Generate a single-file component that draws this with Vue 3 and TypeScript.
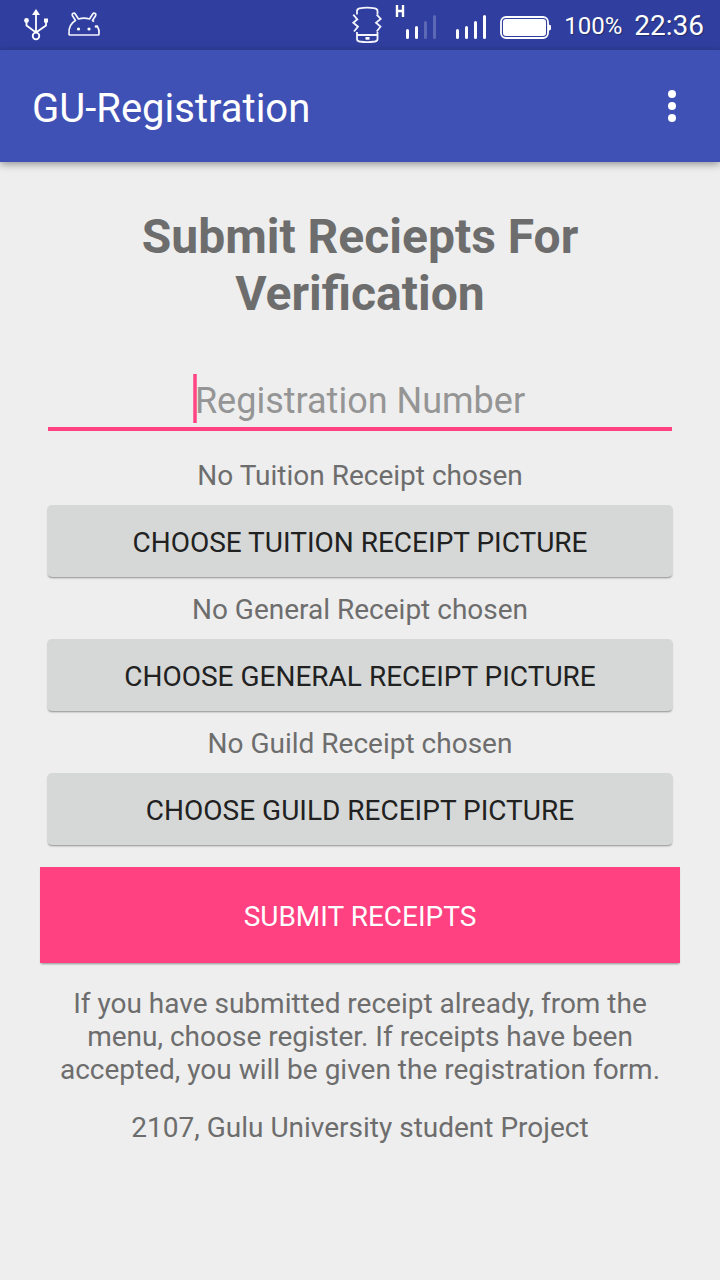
<script setup lang="ts">
import { ref } from 'vue'

interface Receipt {
  id: string
  name: string
}

const receipts: Receipt[] = [
  { id: 'tuition', name: 'Tuition' },
  { id: 'general', name: 'General' },
  { id: 'guild', name: 'Guild' },
]

const registrationNumber = ref('')
</script>

<template>
  <div class="screen">
    <div class="status">
      <svg class="usb" width="28" height="34" viewBox="0 0 28 34" fill="none" stroke="#fff" stroke-width="1.8">
        <path d="M14 5V25M4.500 13V17.500L14 24.500M24 13V17.500L14 24.500" />
        <path d="M14 1L18 7H10Z" fill="#fff" stroke="none" />
        <circle cx="4.500" cy="12.500" r="2.400" fill="#fff" stroke="none" />
        <path d="M22 10.500H26V14.500H22Z" fill="#fff" stroke="none" />
        <circle cx="14" cy="28" r="3.300" />
      </svg>
      <svg class="droid" width="34" height="26" viewBox="0 0 34 26" fill="none" stroke="#f3f4fc" stroke-width="1.700" stroke-linejoin="round">
        <path d="M2 22C1.500 16 4 11 8.500 8.500L5.300 3.500C4.500 1.300 7.300 .3 8.300 2L11.500 7C15 5.800 19 5.800 22.500 7L25.700 2C26.700 .3 29.500 1.300 28.700 3.500L25.500 8.500L27 9.700M30 13.500C31.500 16 32.500 19 32 22Q32 23 31 23H3Q2 23 2 22" />
        <circle cx="11.500" cy="17" r="1.600" fill="#fff" stroke="none" />
        <circle cx="22" cy="17" r="1.600" fill="#fff" stroke="none" />
        <circle cx="29" cy="14.500" r="1.300" fill="#fff" stroke="none" />
      </svg>
      <span class="spacer"></span>
      <svg class="vibrate" width="30" height="38" viewBox="0 0 30 38" fill="none" stroke="#f3f4fc" stroke-width="1.800">
        <path d="M5 8.500V5Q5 2.800 7.500 2.300Q15 1 23 2.300Q25.500 2.800 25.500 5V8.500M5 26V33Q5 35 7.500 35.500Q15 36.800 23 35.500Q25.500 35 25.500 33V26M5 29H25.500" />
        <path d="M1.300 8.700L5.300 13.300L1.300 16.700L6 20.700L2 25.500M24.700 8.700L28.700 13L24 16.700L28.500 20.700L24.700 25.500" />
        <path d="M13.500 31H17.500V33.700H13.500Z" fill="#fff" stroke="none" />
      </svg>
      <svg class="signals" width="92" height="38" viewBox="0 0 92 38" fill="none" stroke="#fff" stroke-width="3" stroke-linecap="round">
        <path d="M2 -1V11M8 -1V11M2 5H8" stroke-width="2.400" stroke-linecap="butt" />
        <path d="M12.500 24.500V31.500M21.500 21.500V31.500M62.500 24.500V31.500M71.500 21.500V31.500M80.500 16.500V31.500M89.500 10.500V31.500" />
        <path d="M30.500 16.500V31.500M39.500 10.500V31.500" stroke-opacity=".22" />
      </svg>
      <svg class="battery" width="52" height="24" viewBox="0 0 52 24">
        <rect x="1" y="1" width="47" height="21" rx="5" fill="none" stroke="#fff" stroke-width="1.800" />
        <rect x="3" y="3" width="43" height="17" rx="3" fill="#fff" />
        <path d="M48 7Q49 9 51 9.500V13.500Q49 14 48 16Z" fill="#fff" />
      </svg>
      <span class="percent">100%</span>
      <span class="clock">22:36</span>
    </div>

    <header class="bar">
      <h1>GU-Registration</h1>
      <button class="more" type="button" aria-label="More options">
        <svg width="8" height="32" viewBox="0 0 8 32" fill="#fff">
          <circle cx="4" cy="4" r="4" /><circle cx="4" cy="16" r="4" /><circle cx="4" cy="28" r="4" />
        </svg>
      </button>
    </header>

    <main>
      <h2>Submit Reciepts For Verification</h2>
      <form @submit.prevent>
        <div class="field">
          <input v-model="registrationNumber" type="text" placeholder="Registration Number" aria-label="Registration Number" />
          <span v-if="!registrationNumber" class="caret"></span>
        </div>
        <div v-for="receipt in receipts" :key="receipt.id" class="receipt">
          <p :id="receipt.id">No {{ receipt.name }} Receipt chosen</p>
          <button class="choose" type="button" :aria-describedby="receipt.id">CHOOSE {{ receipt.name.toUpperCase() }} RECEIPT PICTURE</button>
        </div>
        <button class="submit" type="submit">SUBMIT RECEIPTS</button>
      </form>
      <p class="info">If you have submitted receipt already, from the menu, choose register. If receipts have been accepted, you will be given the registration form.</p>
      <p class="credit">2107, Gulu University student Project</p>
    </main>
  </div>
</template>

<style>
body {
  margin: 0;
  background: #eeeeee;
}
</style>

<style scoped>
.screen {
  min-height: 100vh;
  background: #eeeeee;
  color: #6d6d6d;
  font-family: Roboto, "Liberation Sans", sans-serif;
}

h1, h2, p {
  margin: 0;
}

button, input {
  box-sizing: border-box;
  border: 0;
  padding: 0;
  font-family: inherit;
}

svg {
  display: block;
  flex: none;
  overflow: visible;
}

.status {
  display: flex;
  align-items: center;
  height: 50px;
  padding: 0 16px 0 22px;
  background: #303f9f;
  color: #fff;
}

.droid {
  margin-left: 17px;
}

.spacer {
  flex: 1;
}

.signals {
  margin: 0 13px;
}

.battery {
  margin-top: 6px;
}

.percent,
.clock {
  margin-left: 12px;
  padding-top: 2px;
  line-height: 32px;
  text-shadow: 1px 1px 1px rgba(0, 0, 0, 0.3);
}

.percent {
  font-size: 24px;
}

.clock {
  font-size: 28px;
}

.bar {
  display: flex;
  align-items: center;
  justify-content: space-between;
  height: 112px;
  padding: 0 24px 0 32px;
  background: #3f51b5;
  color: #fff;
  box-shadow: 0 2px 8px rgba(0, 0, 0, 0.4);
}

h1 {
  padding-top: 6px;
  font-size: 40px;
  font-weight: 400;
  line-height: 48px;
}

.more {
  display: flex;
  align-items: center;
  justify-content: center;
  width: 48px;
  height: 64px;
  background: transparent;
}

main {
  padding: 46px 40px;
  text-align: center;
  font-size: 28px;
  line-height: 33px;
}

h2 {
  font-size: 48px;
  font-weight: 700;
  line-height: 57px;
}

.field {
  position: relative;
  margin: 46px 8px 28px;
}

.field input {
  display: block;
  width: 100%;
  height: 63px;
  padding-top: 6px;
  border-bottom: 4px solid #ff4081;
  border-radius: 0;
  outline: 0;
  background: transparent;
  color: #212121;
  font-size: 36px;
  text-align: center;
}

.field input::placeholder {
  color: #959595;
  opacity: 1;
}

.caret {
  position: absolute;
  top: 6px;
  left: calc(50% - 167px);
  width: 4px;
  height: 49px;
  background: linear-gradient(90deg, #ff80ab, #ff4081 40%, #ff4081 60%, #ff80ab);
}

.receipt {
  margin-bottom: 16px;
}

.choose {
  display: block;
  width: calc(100% - 14px);
  height: 72px;
  margin: 13px 7px 0;
  padding-top: 2px;
  border-radius: 5px;
  background: #d6d8d7;
  color: #212121;
  font-size: 28px;
  box-shadow: 0 2px 2px -1px rgba(0, 0, 0, 0.4);
}

.submit {
  display: block;
  width: 100%;
  height: 96px;
  margin: 22px 0 24px;
  padding-top: 2px;
  background: #ff4081;
  color: #fff;
  font-size: 28px;
  box-shadow: 0 2px 2px -1px rgba(0, 0, 0, 0.4);
}

.credit {
  margin-top: 25px;
}
</style>
